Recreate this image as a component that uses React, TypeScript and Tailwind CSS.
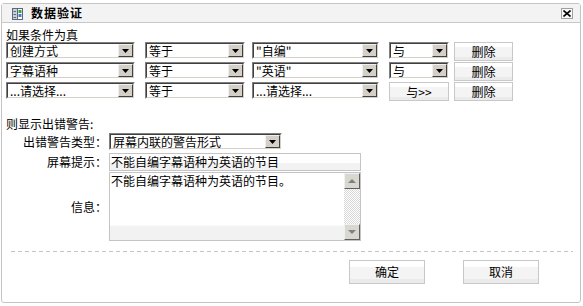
import React from "react";

const font = { fontFamily: '"Noto Sans CJK SC", "Liberation Sans", sans-serif' };

function Arrow() {
  return (
    <svg width="7" height="4" viewBox="0 0 7 4">
      <path d="M0 0H7L3.5 4Z" fill="#000" />
    </svg>
  );
}

function Select({ w, text }: { w: string; text: string }) {
  return (
    <div className={`${w} h-[17px] border border-t-[#808080] border-l-[#808080] border-b-white border-r-white`}>
      <div className="flex h-full w-full border border-t-[#404040] border-l-[#404040] border-b-[#d4d0c8] border-r-[#d4d0c8] bg-white">
        <div className="flex min-w-0 flex-1 items-center whitespace-nowrap pl-[2px] text-[12px] leading-[12px] text-black">
          {text}
        </div>
        <div className="flex w-[15px] shrink-0 items-center justify-center border border-t-[#f0f0f0] border-l-[#f0f0f0] border-b-[#404040] border-r-[#404040] bg-[#d4d0c8]">
          <Arrow />
        </div>
      </div>
    </div>
  );
}

function Btn({ w, h, text }: { w: string; h: string; text: string }) {
  return (
    <div
      className={`${w} ${h} flex items-center justify-center border border-[#c8c8c8] bg-[linear-gradient(to_bottom,#ffffff_0%,#ffffff_25%,#f4f4f4_26%,#f4f4f4_80%,#ebebeb_81%,#ebebeb_100%)] text-[12px] leading-[14px] text-black`}
    >
      {text}
    </div>
  );
}

function ScrollBtn({ up }: { up: boolean }) {
  return (
    <div className="flex h-[16px] w-[16px] items-center justify-center border border-t-[#f0f0f0] border-l-[#f0f0f0] border-b-[#606060] border-r-[#606060] bg-[#d8d8d0]">
      <svg width="8" height="4" viewBox="0 0 8 4">
        <path d={up ? "M0 4H8L4 0Z" : "M0 0H8L4 4Z"} fill="#808080" />
      </svg>
    </div>
  );
}

export default function App() {
  return (
    <div className="h-[306px] w-[583px] bg-white pt-[3px] pl-[1px]" style={font}>
      <div className="flex h-[300px] w-[580px] flex-col rounded-[3px] border border-[#c4c4c4] bg-white">
        {/* title bar */}
        <div className="flex h-[19px] items-center border-b border-[#c8c8c8] bg-[#f3f3f3] pl-[10px] pr-[7px]">
          <svg width="11" height="12" viewBox="0 0 11 12" className="mt-[1px]">
            <rect x="0.5" y="0.5" width="10" height="11" fill="#fff" stroke="#5a6a7a" />
            <rect x="1" y="1" width="4" height="10" fill="#c8d0dc" />
            <line x1="1.5" y1="3.5" x2="4" y2="3.5" stroke="#5a6a7a" />
            <line x1="1.5" y1="6.5" x2="4" y2="6.5" stroke="#5a6a7a" />
            <line x1="1.5" y1="9.5" x2="4" y2="9.5" stroke="#5a6a7a" />
            <line x1="5.5" y1="1" x2="5.5" y2="11" stroke="#5a6a7a" />
            <rect x="6.5" y="2" width="3" height="3" fill="#3aa040" />
            <rect x="6.5" y="6" width="3" height="3" fill="#4a7ac0" />
          </svg>
          <div className="ml-[8px] text-[12px] font-bold leading-[14px] tracking-[1px] text-black">数据验证</div>
          <div className="flex-1" />
          <div className="flex h-[11px] w-[12px] items-center justify-center border border-[#a0a0a0] bg-[#f8f8f8]">
            <svg width="8" height="7" viewBox="0 0 8 7">
              <path d="M0.5 0.5L7.5 6.5M7.5 0.5L0.5 6.5" stroke="#000" strokeWidth="1.6" />
            </svg>
          </div>
        </div>

        {/* content */}
        <div className="flex flex-col pl-[4px]">
          <div className="mt-[4px] h-[15px] text-[12px] leading-[15px] text-black">如果条件为真</div>
          <div className="flex flex-col">
            <div className="flex h-[20px] items-start">
              <Select w="w-[129px]" text="创建方式" />
              <div className="w-[10px]" />
              <Select w="w-[100px]" text="等于" />
              <div className="w-[7px]" />
              <Select w="w-[127px]" text={'"自编"'} />
              <div className="w-[10px]" />
              <Select w="w-[60px]" text="与" />
              <div className="w-[5px]" />
              <Btn w="w-[59px]" h="h-[19px]" text="删除" />
            </div>
            <div className="flex h-[20px] items-start">
              <Select w="w-[129px]" text="字幕语种" />
              <div className="w-[10px]" />
              <Select w="w-[100px]" text="等于" />
              <div className="w-[7px]" />
              <Select w="w-[127px]" text={'"英语"'} />
              <div className="w-[10px]" />
              <Select w="w-[60px]" text="与" />
              <div className="w-[5px]" />
              <Btn w="w-[59px]" h="h-[19px]" text="删除" />
            </div>
            <div className="flex h-[20px] items-start">
              <Select w="w-[129px]" text="...请选择..." />
              <div className="w-[10px]" />
              <Select w="w-[100px]" text="等于" />
              <div className="w-[7px]" />
              <Select w="w-[127px]" text="...请选择..." />
              <div className="w-[10px]" />
              <Btn w="w-[60px]" h="h-[19px]" text="与>>" />
              <div className="w-[5px]" />
              <Btn w="w-[59px]" h="h-[19px]" text="删除" />
            </div>
          </div>

          <div className="mt-[15px] h-[14px] text-[12px] leading-[14px] text-black">则显示出错警告:</div>

          <div className="mt-[2px] grid grid-cols-[101px_auto] gap-x-[2px] text-[12px] leading-[14px] text-black">
            <div className="flex h-[18px] items-center justify-end">出错警告类型：</div>
            <div className="flex h-[18px] items-start">
              <Select w="w-[173px]" text="屏幕内联的警告形式" />
            </div>

            <div className="mt-[2px] flex h-[18px] items-center justify-end">屏幕提示：</div>
            <div className="mt-[2px] flex h-[18px] w-[252px] items-center border border-[#c4c4c4] bg-[linear-gradient(to_bottom,#ffffff_0%,#ffffff_55%,#f2f2f2_56%,#f2f2f2_100%)] pl-[1px]">
              不能自编字幕语种为英语的节目
            </div>

            <div className="mt-[1px] flex h-[69px] items-center justify-end">信息：</div>
            <div className="mt-[1px] flex h-[69px] w-[252px] border border-[#c4c4c4] bg-[linear-gradient(to_bottom,#ffffff_0%,#ffffff_78%,#f2f2f2_79%,#f2f2f2_100%)]">
              <div className="flex-1 pl-[1px] pt-[1px]">不能自编字幕语种为英语的节目。</div>
              <div className="flex w-[16px] flex-col bg-[repeating-conic-gradient(#d8d8d8_0%_25%,#ffffff_0%_50%)] bg-[length:2px_2px]">
                <ScrollBtn up={true} />
                <div className="flex-1" />
                <ScrollBtn up={false} />
              </div>
            </div>
          </div>
        </div>

        {/* dashed divider */}
        <div className="ml-[9px] mr-[7px] mt-[10px] h-[1px] bg-[linear-gradient(to_right,#c4c4c4_4px,transparent_4px)] bg-[length:7px_1px]" />

        {/* footer buttons */}
        <div className="mt-[8px] flex justify-end pr-[41px]">
          <Btn w="w-[76px]" h="h-[24px]" text="确定" />
          <div className="w-[38px]" />
          <Btn w="w-[76px]" h="h-[24px]" text="取消" />
        </div>
      </div>
    </div>
  );
}
